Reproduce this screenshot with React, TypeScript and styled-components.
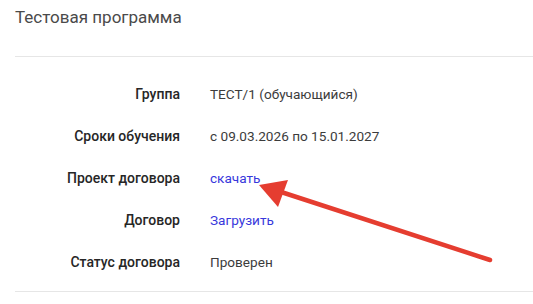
import React from "react";
import styled, { createGlobalStyle } from "styled-components";

const Global = createGlobalStyle`
  html, body { margin: 0; padding: 0; background: #fff; }
  body { font-family: Roboto, "Noto Sans", Arial, sans-serif; width: 533px; height: 304px; overflow: hidden; }
`;

const Page = styled.div`
  position: relative;
  width: 533px;
  height: 304px;
  padding-left: 15px;
  box-sizing: border-box;
`;

const Header = styled.div`
  height: 57px;
  border-bottom: 1px solid #e6e6e6;
  box-sizing: border-box;
  display: flex;
  align-items: flex-start;
  padding-top: 6px;
`;

const Title = styled.h2`
  margin: 0;
  font-size: 17px;
  font-weight: 400;
  color: #4a4a4a;
  line-height: 22px;
`;

const Table = styled.div`
  display: grid;
  grid-template-columns: 165px 1fr;
  column-gap: 30px;
  padding: 16px 0 8px;
  border-bottom: 1px solid #e6e6e6;
`;

const Label = styled.div`
  height: 42px;
  display: flex;
  align-items: center;
  justify-content: flex-end;
  font-size: 14px;
  font-weight: 500;
  color: #262626;
`;

const Value = styled.div<{ $link?: boolean }>`
  height: 42px;
  display: flex;
  align-items: center;
  font-size: 13.6px;
  color: ${(p) => (p.$link ? "#3838dc" : "#3c3c3c")};
  cursor: ${(p) => (p.$link ? "pointer" : "default")};
`;

const Arrow = styled.svg`
  position: absolute;
  left: 0;
  top: 0;
  pointer-events: none;
`;

const rows: { label: string; value: string; link?: boolean }[] = [
  { label: "Группа", value: "ТЕСТ/1 (обучающийся)" },
  { label: "Сроки обучения", value: "с 09.03.2026 по 15.01.2027" },
  { label: "Проект договора", value: "скачать", link: true },
  { label: "Договор", value: "Загрузить", link: true },
  { label: "Статус договора", value: "Проверен" },
];

export default function App() {
  return (
    <Page>
      <Global />
      <Header>
        <Title>Тестовая программа</Title>
      </Header>
      <Table>
        {rows.map((r) => (
          <React.Fragment key={r.label}>
            <Label>{r.label}</Label>
            <Value $link={r.link}>{r.value}</Value>
          </React.Fragment>
        ))}
      </Table>
      <Arrow width="533" height="304" viewBox="0 0 533 304">
        <line x1="490" y1="260" x2="275" y2="190" stroke="#e53d30" strokeWidth="4.5" strokeLinecap="round" />
        <polygon points="259,185 288,180 278,207" fill="#e53d30" />
      </Arrow>
    </Page>
  );
}
